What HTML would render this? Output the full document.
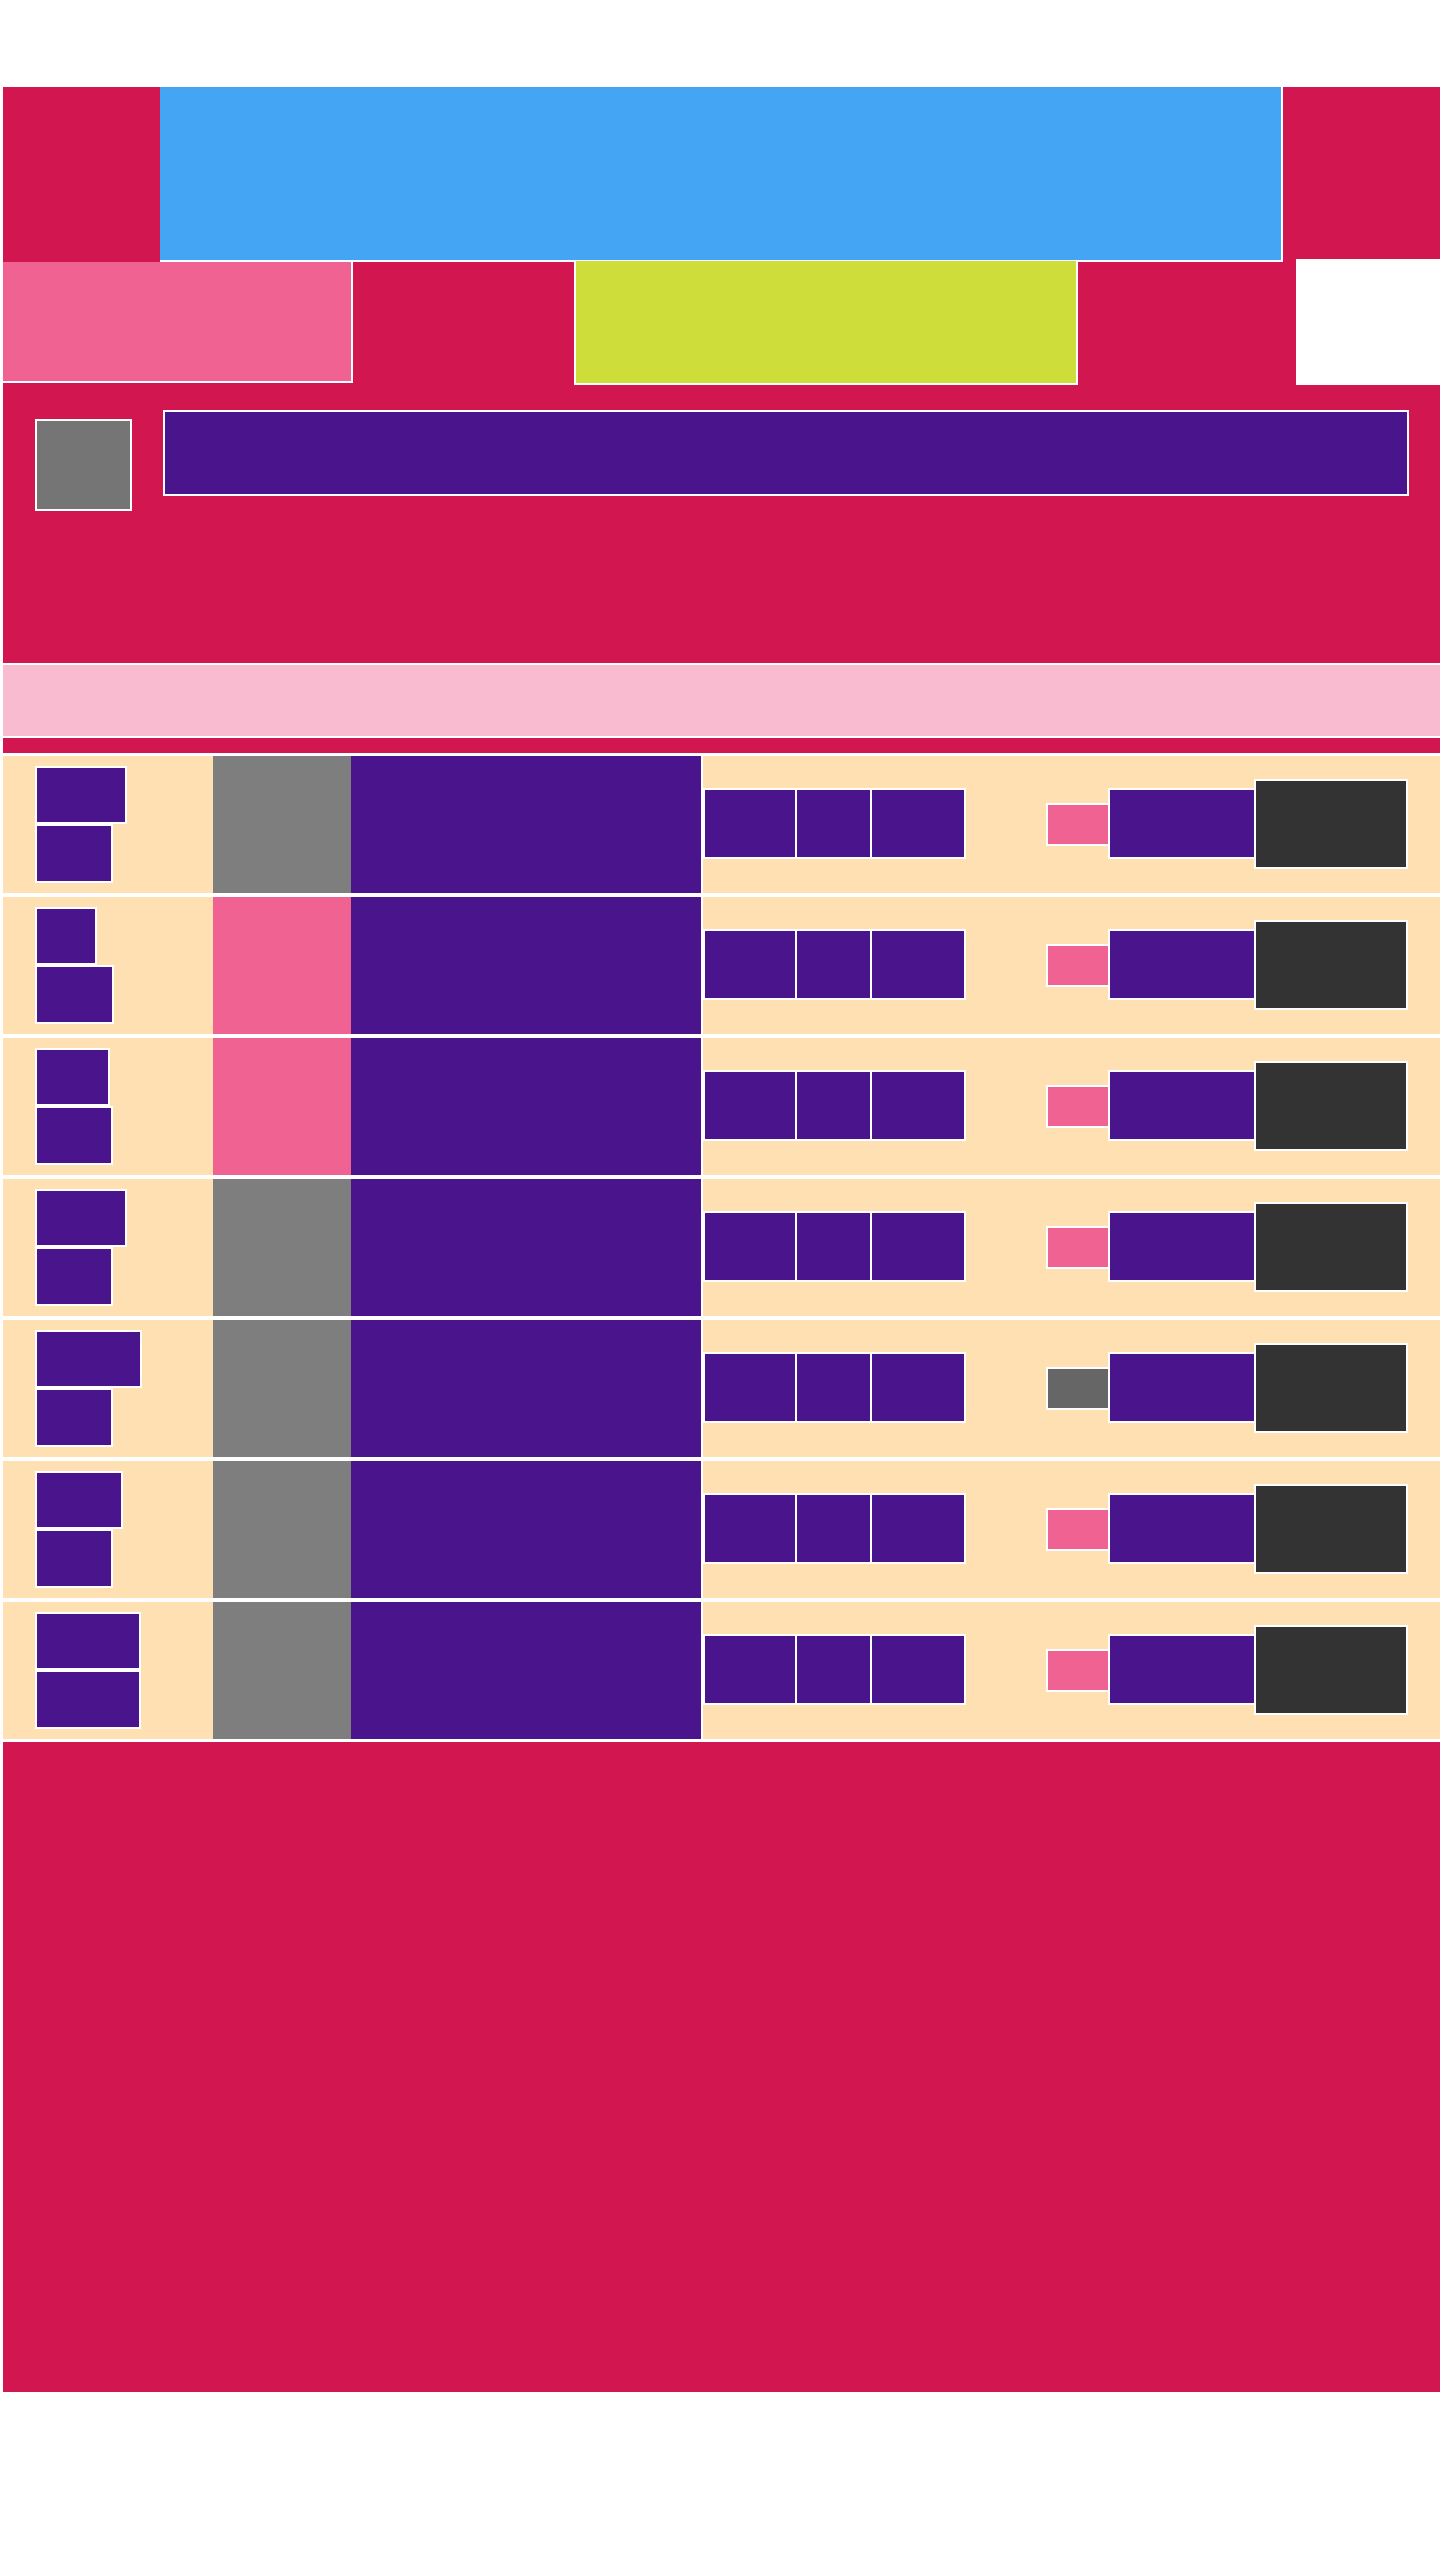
<!DOCTYPE html>
<html><head><meta charset="utf-8"><style>
*{margin:0;padding:0;box-sizing:border-box}
body{width:1440px;height:2560px;background:#fff;position:relative;overflow:hidden;font-family:"Liberation Sans",sans-serif}
div{position:absolute}
.w{border-right:2px solid #fff;border-bottom:2px solid #fff}
.row{left:3px;width:1437px;height:137px;background:#FFE0B2}
.row div{border:2px solid #fff}
.p{background:#4A148C}
.b1{left:32px;top:10px;height:58px}
.b2{left:32px;top:68px;height:59px}
.c2{left:210px;top:0;width:140px;height:137px;border:none!important;border-right:2px solid #fff!important}
.c3{left:348px;top:0;width:352px;height:137px;border:none!important;border-right:2px solid #fff!important;background:#4A148C}
.t1{left:700px;top:32px;width:94px;height:71px}
.t2{left:792px;top:32px;width:77px;height:71px}
.t3{left:867px;top:32px;width:96px;height:71px}
.sm{left:1043px;top:47px;width:64px;height:43px;background:#F06292}
.t4{left:1105px;top:32px;width:148px;height:71px}
.dk{left:1251px;top:23px;width:154px;height:90px;background:#333}
</style></head><body>
<div style="left:3px;top:87px;width:1437px;height:299px;background:#D21650"></div>
<div style="left:1296px;top:259px;width:144px;height:127px;background:#fff"></div>
<div class="w" style="left:160px;top:87px;width:1123px;height:175px;background:#44A5F5"></div>
<div class="w" style="left:3px;top:262px;width:350px;height:121px;background:#F06292"></div>
<div class="w" style="left:574px;top:261px;width:504px;height:124px;background:#CFDD3A;border-left:2px solid #fff"></div>
<div style="left:3px;top:385px;width:1437px;height:278px;background:#D21650"></div>
<div style="left:35px;top:419px;width:97px;height:92px;background:#757575;border:2px solid #fff"></div>
<div style="left:163px;top:410px;width:1246px;height:86px;background:#4A148C;border:2px solid #fff"></div>
<div style="left:3px;top:665px;width:1437px;height:71px;background:#F8BBD0"></div>
<div style="left:3px;top:738px;width:1437px;height:15px;background:#D21650"></div>

<div class="row" style="top:756px"><div class="p b1" style="width:92px"></div><div class="p b2" style="width:78px"></div><div class="c2" style="background:#7E7E7E"></div><div class="c3"></div><div class="p t1"></div><div class="p t2"></div><div class="p t3"></div><div class="sm"></div><div class="p t4"></div><div class="dk"></div></div>
<div class="row" style="top:897px"><div class="p b1" style="width:62px"></div><div class="p b2" style="width:79px"></div><div class="c2" style="background:#F06292"></div><div class="c3"></div><div class="p t1"></div><div class="p t2"></div><div class="p t3"></div><div class="sm"></div><div class="p t4"></div><div class="dk"></div></div>
<div class="row" style="top:1038px"><div class="p b1" style="width:75px"></div><div class="p b2" style="width:78px"></div><div class="c2" style="background:#F06292"></div><div class="c3"></div><div class="p t1"></div><div class="p t2"></div><div class="p t3"></div><div class="sm"></div><div class="p t4"></div><div class="dk"></div></div>
<div class="row" style="top:1179px"><div class="p b1" style="width:92px"></div><div class="p b2" style="width:78px"></div><div class="c2" style="background:#7E7E7E"></div><div class="c3"></div><div class="p t1"></div><div class="p t2"></div><div class="p t3"></div><div class="sm"></div><div class="p t4"></div><div class="dk"></div></div>
<div class="row" style="top:1320px"><div class="p b1" style="width:107px"></div><div class="p b2" style="width:78px"></div><div class="c2" style="background:#7E7E7E"></div><div class="c3"></div><div class="p t1"></div><div class="p t2"></div><div class="p t3"></div><div class="sm" style="background:#666"></div><div class="p t4"></div><div class="dk"></div></div>
<div class="row" style="top:1461px"><div class="p b1" style="width:88px"></div><div class="p b2" style="width:78px"></div><div class="c2" style="background:#7E7E7E"></div><div class="c3"></div><div class="p t1"></div><div class="p t2"></div><div class="p t3"></div><div class="sm"></div><div class="p t4"></div><div class="dk"></div></div>
<div class="row" style="top:1602px"><div class="p b1" style="width:106px"></div><div class="p b2" style="width:106px"></div><div class="c2" style="background:#7E7E7E"></div><div class="c3"></div><div class="p t1"></div><div class="p t2"></div><div class="p t3"></div><div class="sm"></div><div class="p t4"></div><div class="dk"></div></div>

<div style="left:3px;top:1742px;width:1437px;height:650px;background:#D21650"></div>
</body></html>
